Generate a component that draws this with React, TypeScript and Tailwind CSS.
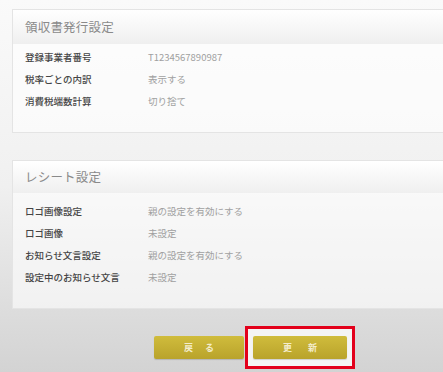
import React from "react";

const font = { fontFamily: '"Noto Sans CJK JP", "Noto Sans", sans-serif' };

function Row({ label, value }: { label: string; value: string }) {
  return (
    <div className="flex items-center h-[22px]">
      <div className="w-[123px] text-[9.5px] font-medium text-[#454545] leading-none">{label}</div>
      <div className="text-[9.5px] text-[#a0a0a0] leading-none">{value}</div>
    </div>
  );
}

function Card({
  title,
  headerH,
  padTop,
  rows,
}: {
  title: string;
  headerH: string;
  padTop: string;
  rows: [string, string][];
}) {
  return (
    <div className="mr-[-30px] border border-[#e4e4e4] bg-white/60">
      <div
        className={`${headerH} flex items-center pl-[12px] bg-gradient-to-b from-white to-[#efefef] text-[12.5px] text-[#8a8a8a] tracking-[0.2px]`}
      >
        {title}
      </div>
      <div className={`${padTop} pb-[19px] pl-[12px]`}>
        {rows.map(([l, v]) => (
          <Row key={l} label={l} value={v} />
        ))}
      </div>
    </div>
  );
}

export default function App() {
  return (
    <div
      style={font}
      className="w-[443px] h-[372px] overflow-hidden bg-gradient-to-b from-[#fafafa] via-[#f0f0f0] to-[#d3d3d3] pt-[9px] pl-[12px]"
    >
      <Card
        title="領収書発行設定"
        headerH="h-[34px]"
        padTop="pt-[3px]"
        rows={[
          ["登録事業者番号", "T1234567890987"],
          ["税率ごとの内訳", "表示する"],
          ["消費税端数計算", "切り捨て"],
        ]}
      />
      <div className="h-[27px]" />
      <Card
        title="レシート設定"
        headerH="h-[32px]"
        padTop="pt-[8px]"
        rows={[
          ["ロゴ画像設定", "親の設定を有効にする"],
          ["ロゴ画像", "未設定"],
          ["お知らせ文言設定", "親の設定を有効にする"],
          ["設定中のお知らせ文言", "未設定"],
        ]}
      />
      <div className="flex items-center mt-[17px] pl-[142px]">
        <button className="w-[90px] h-[23px] rounded-[2px] bg-gradient-to-b from-[#d0bc3c] to-[#b9a32b] text-[9px] font-bold text-[#f3eccb] tracking-[12px] pl-[12px] shadow-[0_1px_1px_rgba(0,0,0,0.15)]">
          戻る
        </button>
        <div className="ml-[1px] border-[3px] border-[#e3001b] px-[5px] py-[7px] bg-[#f4f4f4]">
          <button className="w-[94px] h-[23px] rounded-[2px] bg-gradient-to-b from-[#d0bc3c] to-[#b9a32b] text-[9px] font-bold text-[#f3eccb] tracking-[16px] pl-[16px] shadow-[0_1px_1px_rgba(0,0,0,0.15)] block">
            更新
          </button>
        </div>
      </div>
    </div>
  );
}
